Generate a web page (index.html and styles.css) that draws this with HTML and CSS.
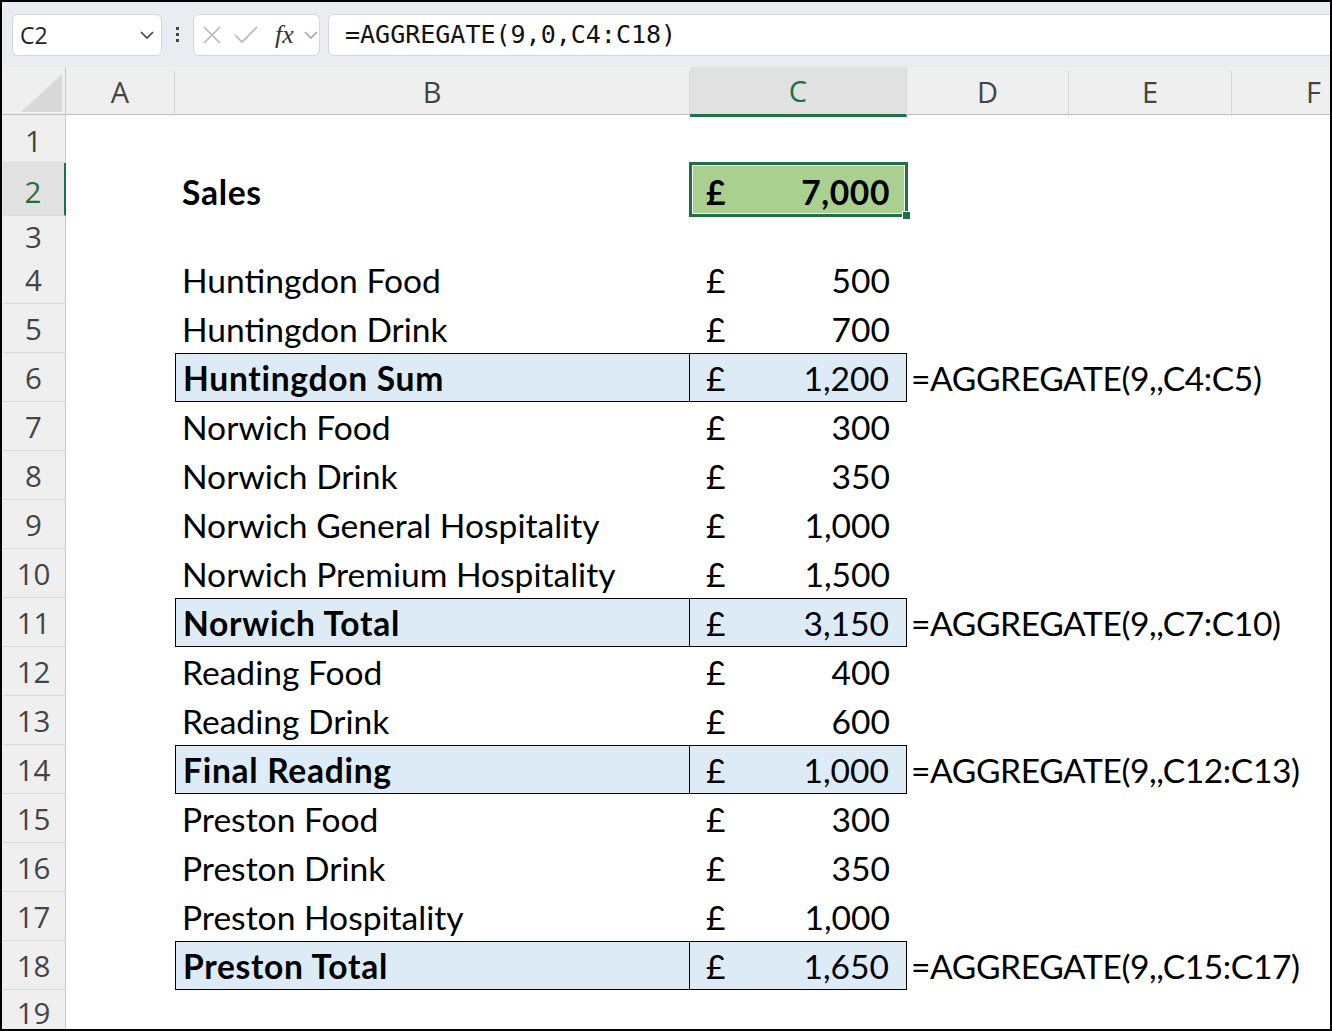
FILE: index.html
```html
<!DOCTYPE html>
<html>
<head>
<meta charset="utf-8">
<link rel="stylesheet" href="styles.css">
</head>
<body>
<div class="frame">
  <div class="toolbar">
    <div class="namebox">
      <span class="nb-text">C2</span>
      <svg class="chev" width="16" height="10" viewBox="0 0 16 10"><path d="M2 2 L8 8 L14 2" fill="none" stroke="#444" stroke-width="1.6"/></svg>
    </div>
    <div class="kebab"><span></span><span></span><span></span></div>
    <div class="fxbox">
      <svg width="20" height="20" viewBox="0 0 20 20"><path d="M2 2 L18 18 M18 2 L2 18" stroke="#b8b8b8" stroke-width="1.6" fill="none"/></svg>
      <svg width="24" height="20" viewBox="0 0 24 20"><path d="M1 10 L8 17 L23 2" stroke="#b8b8b8" stroke-width="1.6" fill="none"/></svg>
      <span class="fx">fx</span>
      <svg class="fxchev" width="14" height="10" viewBox="0 0 14 10"><path d="M1 2 L7 8 L13 2" fill="none" stroke="#999" stroke-width="1.4"/></svg>
    </div>
    <div class="formula">=AGGREGATE(9,0,C4:C18)</div>
  </div>

  <div class="sheet">
    <div class="row hdr">
      <div class="corner"><svg width="42" height="38" viewBox="0 0 42 38"><path d="M0 38 L41 0 L41 38 Z" fill="#d9d9d9"/></svg></div>
      <div class="ch">A</div>
      <div class="ch">B</div>
      <div class="ch sel">C</div>
      <div class="ch">D</div>
      <div class="ch">E</div>
      <div class="ch last">F</div>
    </div>

    <div class="row r1"><div class="rh">1</div><div></div><div></div><div></div><div></div><div></div><div></div></div>

    <div class="row r2">
      <div class="rh sel">2</div><div></div>
      <div class="b bold">Sales</div>
      <div class="c active bold"><span>£</span><span>7,000</span></div>
      <div></div><div></div><div></div>
    </div>

    <div class="row r3"><div class="rh">3</div><div></div><div></div><div></div><div></div><div></div><div></div></div>

    <div class="row"><div class="rh">4</div><div></div><div class="b">Huntingdon Food</div><div class="c"><span>£</span><span>500</span></div><div></div><div></div><div></div></div>
    <div class="row"><div class="rh">5</div><div></div><div class="b">Huntingdon Drink</div><div class="c"><span>£</span><span>700</span></div><div></div><div></div><div></div></div>
    <div class="row sub"><div class="rh">6</div><div></div><div class="b bold">Huntingdon Sum</div><div class="c"><span>£</span><span>1,200</span></div><div class="d">=AGGREGATE(9,,C4:C5)</div><div></div><div></div></div>
    <div class="row"><div class="rh">7</div><div></div><div class="b">Norwich Food</div><div class="c"><span>£</span><span>300</span></div><div></div><div></div><div></div></div>
    <div class="row"><div class="rh">8</div><div></div><div class="b">Norwich Drink</div><div class="c"><span>£</span><span>350</span></div><div></div><div></div><div></div></div>
    <div class="row"><div class="rh">9</div><div></div><div class="b">Norwich General Hospitality</div><div class="c"><span>£</span><span>1,000</span></div><div></div><div></div><div></div></div>
    <div class="row"><div class="rh">10</div><div></div><div class="b">Norwich Premium Hospitality</div><div class="c"><span>£</span><span>1,500</span></div><div></div><div></div><div></div></div>
    <div class="row sub"><div class="rh">11</div><div></div><div class="b bold">Norwich Total</div><div class="c"><span>£</span><span>3,150</span></div><div class="d">=AGGREGATE(9,,C7:C10)</div><div></div><div></div></div>
    <div class="row"><div class="rh">12</div><div></div><div class="b">Reading Food</div><div class="c"><span>£</span><span>400</span></div><div></div><div></div><div></div></div>
    <div class="row"><div class="rh">13</div><div></div><div class="b">Reading Drink</div><div class="c"><span>£</span><span>600</span></div><div></div><div></div><div></div></div>
    <div class="row sub"><div class="rh">14</div><div></div><div class="b bold">Final Reading</div><div class="c"><span>£</span><span>1,000</span></div><div class="d">=AGGREGATE(9,,C12:C13)</div><div></div><div></div></div>
    <div class="row"><div class="rh">15</div><div></div><div class="b">Preston Food</div><div class="c"><span>£</span><span>300</span></div><div></div><div></div><div></div></div>
    <div class="row"><div class="rh">16</div><div></div><div class="b">Preston Drink</div><div class="c"><span>£</span><span>350</span></div><div></div><div></div><div></div></div>
    <div class="row"><div class="rh">17</div><div></div><div class="b">Preston Hospitality</div><div class="c"><span>£</span><span>1,000</span></div><div></div><div></div><div></div></div>
    <div class="row sub"><div class="rh">18</div><div></div><div class="b bold">Preston Total</div><div class="c"><span>£</span><span>1,650</span></div><div class="d">=AGGREGATE(9,,C15:C17)</div><div></div><div></div></div>
    <div class="row r19"><div class="rh">19</div><div></div><div></div><div></div><div></div><div></div><div></div></div>
  </div>
</div>
</body>
</html>
```

FILE: styles.css
```css
* { box-sizing: border-box; }
html, body { margin: 0; padding: 0; background: #fff; }
.frame {
  width: 1332px;
  height: 1031px;
  border: 2px solid #000;
  overflow: hidden;
  display: flex;
  flex-direction: column;
  background: #fff;
}
.toolbar {
  height: 65px;
  flex: none;
  background: #e9edf1;
  display: flex;
  align-items: center;
  padding: 0 0 0 10px;
}
.namebox {
  width: 150px;
  height: 42px;
  background: #fff;
  border: 1px solid #d6d6d6;
  border-radius: 6px;
  display: flex;
  align-items: center;
  justify-content: space-between;
  padding: 0 6px 0 7px;
}
.nb-text {
  font-family: "Open Sans", "Noto Sans", sans-serif;
  font-size: 23px;
  color: #222;
}
.kebab {
  width: 31px;
  display: flex;
  flex-direction: column;
  align-items: center;
  gap: 3px;
}
.kebab span { width: 3px; height: 3px; background: #444; display: block; }
.fxbox {
  width: 127px;
  height: 42px;
  background: #fff;
  border: 1px solid #d6d6d6;
  border-radius: 6px;
  display: flex;
  align-items: center;
  gap: 14px;
  padding: 0 0 0 8px;
}
.fxbox svg:nth-child(2) { margin-left: -2px; }
.fx {
  font-family: "Liberation Serif", "DejaVu Serif", serif;
  font-style: italic;
  font-size: 26px;
  color: #333;
  margin-left: 3px;
  margin-right: -6px;
}
.fxchev { margin-left: 2px; }
.formula {
  flex: 1;
  height: 42px;
  margin-left: 8px;
  margin-right: -10px;
  background: #fff;
  border: 1px solid #d6d6d6;
  border-radius: 6px;
  display: flex;
  align-items: center;
  padding-left: 16px;
  font-family: "DejaVu Sans Mono", "Liberation Mono", monospace;
  font-size: 25px;
  color: #111;
}

.sheet { flex: 1; display: flex; flex-direction: column; }
.row {
  display: grid;
  grid-template-columns: 64px 109px 515px 217px 162px 163px 163px;
  height: 49px;
  flex: none;
}
.row.hdr { height: 48px; background: #efefef; border-bottom: 1px solid #bdbdbd; }
.row.r1 { height: 48px; }
.row.r2 { height: 53px; }
.row.r3 { height: 39px; }
.row.r19 { flex: 1; height: auto; }

.corner {
  border-right: 1px solid #c8c8c8;
  display: flex;
  align-items: flex-end;
  justify-content: flex-end;
  padding: 0 2px 4px 0;
}
.ch {
  font-family: "Open Sans", "Noto Sans", sans-serif;
  font-size: 29px;
  color: #444;
  display: flex;
  align-items: center;
  justify-content: center;
  border-right: 1px solid #d6d6d6;
  margin-top: 4px;
  padding-bottom: 4px;
}
.ch.last { border-right: none; }
.ch.sel {
  background: #e1e1e1;
  color: #1e7145;
  border-bottom: 3px solid #1e7145;
  margin-bottom: -1px;
  margin-top: 0;
  padding-top: 4px;
}
.rh {
  background: #efefef;
  border-right: 1px solid #c8c8c8;
  border-bottom: 1px solid #dadada;
  font-family: "Open Sans", "Noto Sans", sans-serif;
  font-size: 29.5px;
  color: #444;
  display: flex;
  align-items: center;
  justify-content: center;
}
.r1 .rh { padding-top: 3px; }
.r2 .rh { padding-top: 5px; }
.r19 .rh { align-items: flex-start; padding-top: 8px; line-height: 1; border-bottom: none; }
.rh.sel {
  background: #e1e1e1;
  color: #1e7145;
  border-right: 2px solid #1e7145;
}

.b, .c, .d {
  font-family: "Lato", "Carlito", sans-serif;
  font-size: 33.6px;
  color: #000;
  display: flex;
  align-items: center;
  white-space: nowrap;
}
.r2 .b, .r2 .c { padding-top: 4px; }
.b { padding-left: 7px; }
.c { justify-content: space-between; padding: 0 17px 0 16px; }
.d { padding-left: 4px; overflow: visible; letter-spacing: -0.4px; }
.bold { font-weight: 700; letter-spacing: 0.6px; }
.b.bold { letter-spacing: 0.7px; }

.sub .b {
  background: #ddebf7;
  border: 1px solid #000;
}
.sub .c {
  background: #ddebf7;
  border-top: 1px solid #000;
  border-right: 1px solid #000;
  border-bottom: 1px solid #000;
}

.c.active {
  background: #a9d08e;
  position: relative;
}
.c.active::before {
  content: "";
  position: absolute;
  left: -1px; top: -1px; right: -1px; bottom: -1px;
  border: 3px solid #1e7145;
  box-shadow: inset 0 0 0 1px #fff;
}
.c.active::after {
  content: "";
  position: absolute;
  width: 7px; height: 7px;
  right: -3px; bottom: -3px;
  background: #1e7145;
  box-shadow: -1px -1px 0 0 #fff;
}
```
